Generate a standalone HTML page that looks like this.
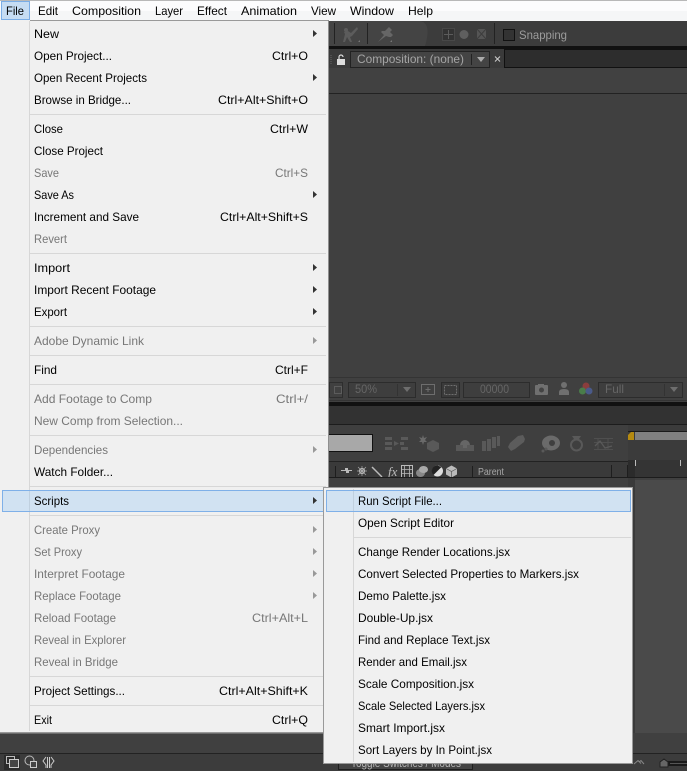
<!DOCTYPE html>
<html><head><meta charset="utf-8"><style>
html,body{margin:0;padding:0;background:#414141;width:687px;height:771px;overflow:hidden}
svg{display:block;position:absolute;left:0;top:0}
text{font-family:"Liberation Sans",sans-serif;font-size:12px;fill:#000}
.d{fill:#777}
.p{fill:#666;font-size:12px}
</style></head><body>
<svg width="687" height="771" viewBox="0 0 687 771" xmlns="http://www.w3.org/2000/svg">
<!-- app background -->
<rect width="687" height="771" fill="#414141"/>
<rect x="328" y="21" width="359" height="25" fill="#3c3c3c"/>
<path d="M420 21 Q432 23 425 46 L328 46 L328 21Z" fill="#444"/>
<rect x="328" y="46" width="359" height="3" fill="#111"/>
<rect x="328" y="49" width="359" height="19" fill="#3a3a3a"/>
<rect x="504.500" y="49.500" width="183" height="18" fill="#2d2d2d" stroke="#111"/>
<rect x="328" y="68" width="359" height="25" fill="#414141"/>
<rect x="328" y="93" width="359" height="1" fill="#222"/>
<rect x="328" y="94" width="359" height="284" fill="#404040"/>
<!-- toolbar icons -->
<path d="M334.500 23V44M367.500 23V44M494.500 23V44" stroke="#222"/>
<circle cx="346" cy="30" r="2" fill="#5c5c5c"/>
<path d="M343 42l2-8-1-2 4-1 3 2 6-6 1 2-6 7-2 1 2 5h-2l-3-5-2 5z" fill="#5c5c5c"/>
<path d="M358 42l2-2v2z" fill="#777"/>
<path d="M378 42l6-7-3-3 1-1 3 0 4-4 3 3-2 2 3 3-2 2-2 0-3-1-8 6z" fill="#666"/>
<path d="M390 42l2-2v2z" fill="#777"/>
<rect x="442.500" y="28.500" width="12" height="12" fill="#333" stroke="#484848"/>
<path d="M448.500 30v9M444 34.500h9" stroke="#5c5c5c"/>
<circle cx="464" cy="34.500" r="4.500" fill="#5f5f5f"/>
<path d="M477 29h9v10h-9z" fill="#555"/><path d="M477 29l9 10M486 29l-9 10" stroke="#3d3d3d"/>
<rect x="503.500" y="29.500" width="11" height="11" fill="#333" stroke="#111"/>
<text x="519" y="39" style="fill:#9c9c9c" textLength="48" lengthAdjust="spacingAndGlyphs">Snapping</text>
<!-- tab -->
<path d="M331 55v9" stroke="#666" stroke-dasharray="1 1"/>
<rect x="337" y="59" width="8" height="6" fill="#ddd"/>
<path d="M339 59v-2a2 2 0 0 1 4 0" fill="none" stroke="#ddd" stroke-width="1.200"/>
<rect x="350.500" y="51.500" width="139" height="16" fill="#444" stroke="#222"/>
<text x="357" y="63" style="fill:#a5a5a5" textLength="107" lengthAdjust="spacingAndGlyphs">Composition: (none)</text>
<path d="M471.500 54V65" stroke="#222"/>
<path d="M477 57h8l-4 5z" fill="#aaa"/>
<path d="M495 56.500l5 5M500 56.500l-5 5" stroke="#ccc" fill="none"/>
<!-- viewer footer -->
<rect x="328" y="378" width="359" height="23" fill="#404040"/>
<path d="M328 377.500H687M328 400.500H687" stroke="#343434"/>
<rect x="329.500" y="382.500" width="13" height="15" fill="none" stroke="#2e2e2e"/>
<rect x="334.500" y="386.500" width="7" height="7" fill="none" stroke="#5c5c5c"/>
<rect x="348.500" y="382.500" width="67" height="15" fill="#3e3e3e" stroke="#2c2c2c"/>
<text x="355" y="393" class="p" textLength="22" lengthAdjust="spacingAndGlyphs">50%</text>
<path d="M397.500 384V396" stroke="#333"/><path d="M403 387h8l-4 5z" fill="#6e6e6e"/>
<rect x="421.500" y="384.500" width="13" height="10" fill="none" stroke="#6e6e6e"/><path d="M428 387v5M425.500 389.500h5" stroke="#6e6e6e"/>
<rect x="441.500" y="382.500" width="18" height="15" fill="#3a3a3a" stroke="#2c2c2c"/>
<rect x="444.500" y="385.500" width="12" height="9" fill="none" stroke="#6e6e6e" stroke-dasharray="2 1"/>
<rect x="463.500" y="382.500" width="66" height="15" fill="#3e3e3e" stroke="#2c2c2c"/>
<text x="480" y="393" class="p" textLength="29" lengthAdjust="spacingAndGlyphs">00000</text>
<rect x="535" y="385" width="13" height="10" rx="1" fill="#707070"/><rect x="538" y="384" width="6" height="2" fill="#707070"/><circle cx="541.500" cy="390" r="2.500" fill="#444"/>
<circle cx="564" cy="385" r="3" fill="#707070"/><path d="M559 395v-3q0-3 5-3t5 3v3z" fill="#707070"/>
<circle cx="586" cy="386" r="3.500" fill="#8a3d3d"/><circle cx="582.500" cy="391" r="3.500" fill="#4a7d4a"/><circle cx="589" cy="391" r="3.500" fill="#4a5a8a"/>
<rect x="598.500" y="382.500" width="84" height="15" fill="#3e3e3e" stroke="#2c2c2c"/>
<text x="605" y="393" class="p" textLength="19" lengthAdjust="spacingAndGlyphs">Full</text>
<path d="M664.500 384V396" stroke="#333"/><path d="M670 387h8l-4 5z" fill="#6e6e6e"/>
<!-- black bar & timeline tab -->
<rect x="328" y="402" width="359" height="4" fill="#111"/>
<rect x="328" y="406" width="359" height="18" fill="#323232"/>
<rect x="328" y="424" width="359" height="1" fill="#1c1c1c"/>
<rect x="328" y="425" width="300" height="36" fill="#3f3f3f"/>
<rect x="328" y="434.500" width="44.500" height="17" fill="#a8a8a8" stroke="#111"/>
<g fill="#595959">
<path d="M385 437h7v3h-7zM385 442h7v3h-7zM385 447h7v3h-7zM394 441l5 2.500-5 2.500zM400 442h4v3h-4zM401 437h7v3h-7zM401 447h7v3h-7z"/>
<path d="M433 440l6 3v6l-6 3-6-3v-6z"/><path d="M423 435l1 3 3-1-2 3 2 2-3 0-1 3-1-3-3 0 2-2-2-3 3 1z" fill="#6a6a6a"/>
<path d="M456 445h18v6h-18z"/><path d="M460 445a5 5 0 0 1 10 0z" fill="#666"/><path d="M463 443h4v5h-4z" fill="#666"/>
<path d="M482 441h4v10h-4zM487 439h4v12h-4zM492 437h4v11h-4zM497 436h3v10h-3z"/>
<path d="M510 443l8-7 5-1 2 4-1 3-9 7-4 2-3-4z" fill="#5c5c5c"/>
<ellipse cx="551" cy="443" rx="9" ry="7.500" fill="#6a6a6a"/><circle cx="552" cy="443" r="3" fill="#3f3f3f"/><circle cx="543" cy="451" r="1.500"/><circle cx="546" cy="449" r="1.500"/>
<circle cx="576.500" cy="445" r="5.500" fill="none" stroke="#595959" stroke-width="2"/><path d="M572 436h9l-2 3h-5z"/>
</g>
<path d="M594 438.500h19M594 442.500h19M594 449.500h19M598 438v12M608 438v12" stroke="#4f4f4f" fill="none"/>
<path d="M595 446l5-5 5 7 7-2" stroke="#595959" fill="none" stroke-width="1.300"/>
<rect x="328" y="461" width="300" height="1" fill="#222"/>
<rect x="328" y="462" width="300" height="15" fill="#3a3a3a"/>
<path d="M335.500 466V477M472.500 466V477M611.500 465V477M627.500 465V477" stroke="#1e1e1e"/>
<g fill="#bbb" stroke="none">
<path d="M341 470h4v-2h3v2h4v1h-3v2h-3v-2h-5z"/>
<circle cx="362" cy="471" r="2.500" fill="none" stroke="#bbb" stroke-width="1.200"/>
<path d="M358 467l8 8M366 467l-8 8M362 466v10M357 471h10" stroke="#aaa" stroke-width=".7"/>
<path d="M372 467l10 10" stroke="#bbb" stroke-width="1.500"/>
<rect x="401.500" y="465.500" width="11" height="12" fill="none" stroke="#bbb"/><path d="M404.500 465v12M409.500 465v12M401 469.500h11M401 473.500h11" stroke="#bbb" stroke-width=".8"/>
<ellipse cx="420.500" cy="473" rx="4.500" ry="4" fill="#888"/><ellipse cx="423.500" cy="469.500" rx="4.500" ry="3.500" fill="#aaa"/>
<circle cx="437.500" cy="471" r="5.500" fill="#ddd"/><path d="M437.500 465.500a5.500 5.500 0 0 0-4 9.500l8-8z" fill="#222"/>
<path d="M451.500 465.500l5.500 3v6l-5.500 3-5.500-3v-6z" fill="#bbb"/><path d="M446 468.500l5.500 3 5.500-3M451.500 471.500v6" stroke="#555" fill="none" stroke-width=".7"/>
</g>
<text x="388" y="476" style="font-family:'Liberation Serif',serif;font-style:italic;fill:#bbb;font-size:13px">fx</text>
<text x="478" y="475" style="fill:#a5a5a5;font-size:10px" textLength="26" lengthAdjust="spacingAndGlyphs">Parent</text>
<!-- timeline right -->
<rect x="628" y="425" width="59" height="52" fill="#3b3b3b"/>
<rect x="628" y="431" width="59" height="1" fill="#1a1a1a"/>
<path d="M628 440v-5l3-3h3v8z" fill="#b58a10"/>
<rect x="635" y="432" width="52" height="8" fill="#808080"/>
<rect x="628" y="460" width="59" height="17" fill="#343434"/>
<rect x="628" y="460" width="7" height="17" fill="#2b2b2b"/>
<rect x="635" y="460" width="1" height="6" fill="#bbb"/><rect x="680" y="460" width="1" height="6" fill="#bbb"/>
<rect x="328" y="477" width="359" height="1" fill="#1c1c1c"/>
<rect x="328" y="478" width="359" height="10" fill="#404040"/>
<rect x="628" y="478" width="7" height="275" fill="#3a3a3a"/>
<rect x="635" y="480" width="52" height="273" fill="#4a4a4a"/>
<!-- bottom -->
<rect x="0" y="733" width="687" height="20" fill="#404040"/>
<rect x="0" y="753" width="687" height="1" fill="#222"/>
<rect x="0" y="754" width="687" height="17" fill="#3c3c3c"/>
<rect x="4" y="755" width="16" height="15" fill="#2b2b2b"/>
<rect x="6.500" y="756.500" width="8" height="7" fill="none" stroke="#bbb"/><rect x="9.500" y="759.500" width="9" height="8" fill="#444" stroke="#ccc"/>
<circle cx="29.500" cy="760.500" r="4.500" fill="none" stroke="#bbb"/><rect x="30.500" y="761.500" width="6" height="6" fill="#444" stroke="#ccc"/>
<path d="M46 757l-3 4 3 4v3M51 757l3 4-3 4v3M47.500 757v11M49.500 757v11" stroke="#ccc" fill="none"/>
<rect x="338.500" y="755.500" width="134" height="14" fill="#444" stroke="#1e1e1e"/>
<text x="351" y="767" style="fill:#b5b5b5;font-size:11.500px" textLength="110" lengthAdjust="spacingAndGlyphs">Toggle Switches / Modes</text>
<path d="M634 764l4-3.500 3 3M639 762l2-1.500 3 3.500" stroke="#888" fill="none"/>
<rect x="660" y="761" width="27" height="5" fill="#1a1a1a"/><rect x="670" y="763" width="17" height="1" fill="#555"/>
<path d="M660 767v-5l4-3 4 3v5z" fill="#666" stroke="#222"/>
<!-- menu bar -->
<rect x="0" y="0" width="687" height="1" fill="#b8b8b8"/>
<rect x="0" y="1" width="687" height="20" fill="#f5f6f7"/>
<rect x="0" y="1" width="687" height="10" fill="#fcfcfd"/>
<rect x="1.500" y="1.500" width="28" height="18" fill="#c6dcf3" stroke="#7bade6"/>
<text x="6" y="15" textLength="18" lengthAdjust="spacingAndGlyphs">File</text>
<text x="38" y="15" textLength="20" lengthAdjust="spacingAndGlyphs">Edit</text>
<text x="72" y="15" textLength="69" lengthAdjust="spacingAndGlyphs">Composition</text>
<text x="155" y="15" textLength="28" lengthAdjust="spacingAndGlyphs">Layer</text>
<text x="197" y="15" textLength="30" lengthAdjust="spacingAndGlyphs">Effect</text>
<text x="241" y="15" textLength="56" lengthAdjust="spacingAndGlyphs">Animation</text>
<text x="311" y="15" textLength="25" lengthAdjust="spacingAndGlyphs">View</text>
<text x="350" y="15" textLength="44" lengthAdjust="spacingAndGlyphs">Window</text>
<text x="408" y="15" textLength="25" lengthAdjust="spacingAndGlyphs">Help</text>
<!-- file menu -->
<rect x="0" y="20" width="328" height="713" fill="#f0f0f0"/>
<rect x="30" y="20" width="298" height="1" fill="#999"/>
<rect x="328" y="20" width="1" height="713" fill="#8f8f8f"/>
<rect x="0" y="732" width="329" height="1.500" fill="#999"/>
<rect x="29" y="21" width="1" height="710" fill="#d7d7d7"/>
<g fill="#d7d7d7">
<rect x="30" y="114" width="296" height="1"/><rect x="30" y="253" width="296" height="1"/><rect x="30" y="326" width="296" height="1"/><rect x="30" y="355" width="296" height="1"/><rect x="30" y="384" width="296" height="1"/><rect x="30" y="435" width="296" height="1"/><rect x="30" y="486" width="296" height="1"/><rect x="30" y="515" width="296" height="1"/><rect x="30" y="676" width="296" height="1"/><rect x="30" y="705" width="296" height="1"/>
</g>
<rect x="2.500" y="490.500" width="322" height="21" fill="#d1e2f2" stroke="#7fb0e8"/>
<rect x="29" y="491" width="1" height="20" fill="#c0d0df"/>
<text x="34" y="38" textLength="25" lengthAdjust="spacingAndGlyphs">New</text>
<text x="34" y="60" textLength="78" lengthAdjust="spacingAndGlyphs">Open Project...</text>
<text x="34" y="82" textLength="113" lengthAdjust="spacingAndGlyphs">Open Recent Projects</text>
<text x="34" y="104" textLength="97" lengthAdjust="spacingAndGlyphs">Browse in Bridge...</text>
<text x="34" y="133" textLength="29" lengthAdjust="spacingAndGlyphs">Close</text>
<text x="34" y="155" textLength="69" lengthAdjust="spacingAndGlyphs">Close Project</text>
<text x="34" y="177" class="d" textLength="25" lengthAdjust="spacingAndGlyphs">Save</text>
<text x="34" y="199" textLength="40" lengthAdjust="spacingAndGlyphs">Save As</text>
<text x="34" y="221" textLength="105" lengthAdjust="spacingAndGlyphs">Increment and Save</text>
<text x="34" y="243" class="d" textLength="33" lengthAdjust="spacingAndGlyphs">Revert</text>
<text x="34" y="272" textLength="36" lengthAdjust="spacingAndGlyphs">Import</text>
<text x="34" y="294" textLength="122" lengthAdjust="spacingAndGlyphs">Import Recent Footage</text>
<text x="34" y="316" textLength="33" lengthAdjust="spacingAndGlyphs">Export</text>
<text x="34" y="345" class="d" textLength="110" lengthAdjust="spacingAndGlyphs">Adobe Dynamic Link</text>
<text x="34" y="374" textLength="23" lengthAdjust="spacingAndGlyphs">Find</text>
<text x="34" y="403" class="d" textLength="118" lengthAdjust="spacingAndGlyphs">Add Footage to Comp</text>
<text x="34" y="425" class="d" textLength="149" lengthAdjust="spacingAndGlyphs">New Comp from Selection...</text>
<text x="34" y="454" class="d" textLength="74" lengthAdjust="spacingAndGlyphs">Dependencies</text>
<text x="34" y="476" textLength="79" lengthAdjust="spacingAndGlyphs">Watch Folder...</text>
<text x="34" y="505" textLength="35" lengthAdjust="spacingAndGlyphs">Scripts</text>
<text x="34" y="534" class="d" textLength="66" lengthAdjust="spacingAndGlyphs">Create Proxy</text>
<text x="34" y="556" class="d" textLength="48" lengthAdjust="spacingAndGlyphs">Set Proxy</text>
<text x="34" y="578" class="d" textLength="91" lengthAdjust="spacingAndGlyphs">Interpret Footage</text>
<text x="34" y="600" class="d" textLength="87" lengthAdjust="spacingAndGlyphs">Replace Footage</text>
<text x="34" y="622" class="d" textLength="82" lengthAdjust="spacingAndGlyphs">Reload Footage</text>
<text x="34" y="644" class="d" textLength="92" lengthAdjust="spacingAndGlyphs">Reveal in Explorer</text>
<text x="34" y="666" class="d" textLength="84" lengthAdjust="spacingAndGlyphs">Reveal in Bridge</text>
<text x="34" y="695" textLength="91" lengthAdjust="spacingAndGlyphs">Project Settings...</text>
<text x="34" y="724" textLength="18" lengthAdjust="spacingAndGlyphs">Exit</text>
<!-- shortcuts -->
<text x="272" y="60" textLength="36" lengthAdjust="spacingAndGlyphs">Ctrl+O</text>
<text x="218" y="104" textLength="90" lengthAdjust="spacingAndGlyphs">Ctrl+Alt+Shift+O</text>
<text x="270" y="133" textLength="38" lengthAdjust="spacingAndGlyphs">Ctrl+W</text>
<text x="275" y="177" class="d" textLength="33" lengthAdjust="spacingAndGlyphs">Ctrl+S</text>
<text x="220" y="221" textLength="88" lengthAdjust="spacingAndGlyphs">Ctrl+Alt+Shift+S</text>
<text x="275" y="374" textLength="33" lengthAdjust="spacingAndGlyphs">Ctrl+F</text>
<text x="276" y="403" class="d" textLength="32" lengthAdjust="spacingAndGlyphs">Ctrl+/</text>
<text x="252" y="622" class="d" textLength="56" lengthAdjust="spacingAndGlyphs">Ctrl+Alt+L</text>
<text x="219" y="695" textLength="89" lengthAdjust="spacingAndGlyphs">Ctrl+Alt+Shift+K</text>
<text x="272" y="724" textLength="36" lengthAdjust="spacingAndGlyphs">Ctrl+Q</text>
<!-- arrows -->
<g fill="#333">
<path d="M313 30v7l4-3.500z"/><path d="M313 74v7l4-3.500z"/><path d="M313 191v7l4-3.500z"/><path d="M313 264v7l4-3.500z"/><path d="M313 286v7l4-3.500z"/><path d="M313 308v7l4-3.500z"/><path d="M313 497v7l4-3.500z"/>
</g>
<g fill="#999">
<path d="M313 337v7l4-3.500z"/><path d="M313 446v7l4-3.500z"/><path d="M313 526v7l4-3.500z"/><path d="M313 548v7l4-3.500z"/><path d="M313 570v7l4-3.500z"/><path d="M313 592v7l4-3.500z"/>
</g>
<!-- submenu -->
<rect x="323.500" y="487.500" width="309" height="276" fill="#f0f0f0" stroke="#999"/>
<rect x="353" y="489" width="1" height="273" fill="#d7d7d7"/>
<rect x="326.500" y="490.500" width="304" height="21" fill="#d1e2f2" stroke="#7fb0e8"/>
<rect x="353" y="491" width="1" height="20" fill="#c0d0df"/>
<rect x="354" y="537" width="277" height="1" fill="#d7d7d7"/>
<text x="358" y="505" textLength="84" lengthAdjust="spacingAndGlyphs">Run Script File...</text>
<text x="358" y="527" textLength="96" lengthAdjust="spacingAndGlyphs">Open Script Editor</text>
<text x="358" y="556" textLength="152" lengthAdjust="spacingAndGlyphs">Change Render Locations.jsx</text>
<text x="358" y="578" textLength="221" lengthAdjust="spacingAndGlyphs">Convert Selected Properties to Markers.jsx</text>
<text x="358" y="600" textLength="88" lengthAdjust="spacingAndGlyphs">Demo Palette.jsx</text>
<text x="358" y="622" textLength="75" lengthAdjust="spacingAndGlyphs">Double-Up.jsx</text>
<text x="358" y="644" textLength="132" lengthAdjust="spacingAndGlyphs">Find and Replace Text.jsx</text>
<text x="358" y="666" textLength="109" lengthAdjust="spacingAndGlyphs">Render and Email.jsx</text>
<text x="358" y="688" textLength="116" lengthAdjust="spacingAndGlyphs">Scale Composition.jsx</text>
<text x="358" y="710" textLength="127" lengthAdjust="spacingAndGlyphs">Scale Selected Layers.jsx</text>
<text x="358" y="732" textLength="87" lengthAdjust="spacingAndGlyphs">Smart Import.jsx</text>
<text x="358" y="754" textLength="134" lengthAdjust="spacingAndGlyphs">Sort Layers by In Point.jsx</text>
</svg>
</body></html>
